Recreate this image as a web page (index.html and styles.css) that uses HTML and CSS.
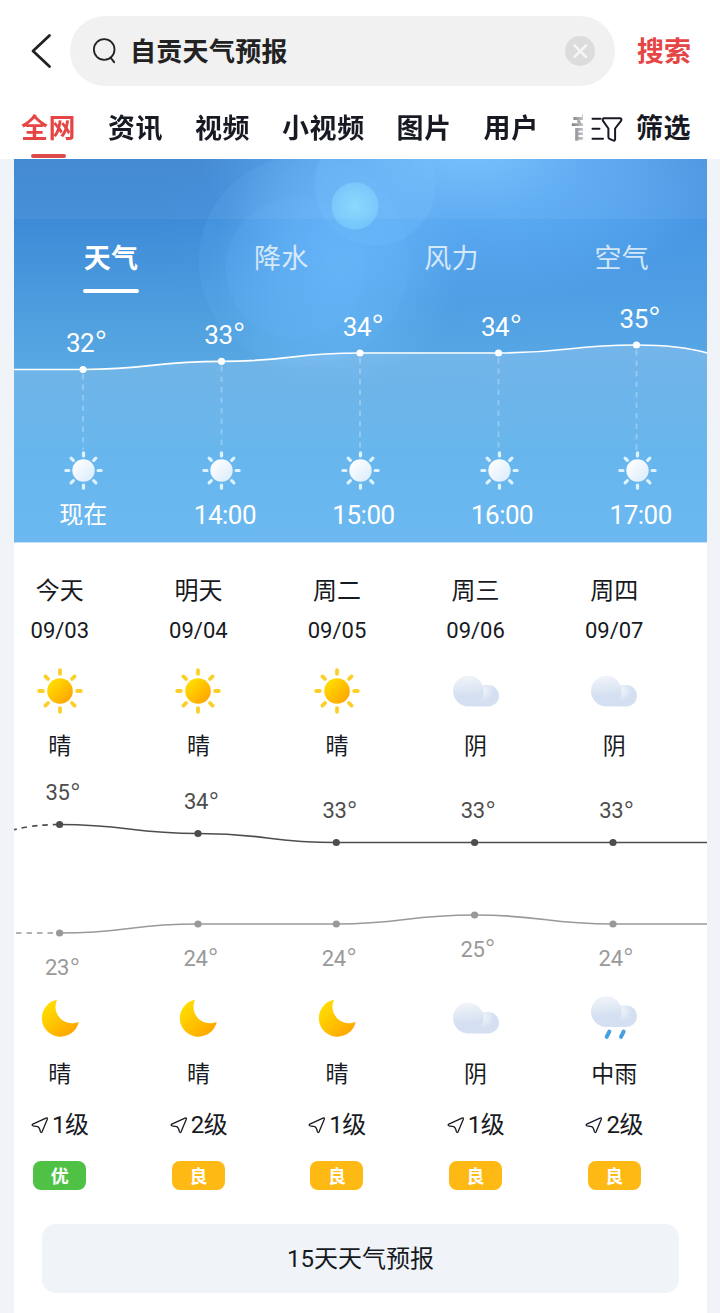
FILE: index.html
```html
<!DOCTYPE html>
<html lang="zh-CN">
<head>
  <meta charset="UTF-8">
  <title>自贡天气预报</title>
  <meta name="viewport" content="width=device-width, initial-scale=1.0">
  <link rel="stylesheet" href="styles.css">
</head>
<body>

<!-- shared icons -->
<svg class="sprite" width="0" height="0">
  <defs>
    <linearGradient id="gold" x1="0" y1="0" x2="1" y2="1">
      <stop offset="0.1" stop-color="#ffe000"/>
      <stop offset="0.9" stop-color="#ffa400"/>
    </linearGradient>
    <linearGradient id="pale" x1="0" y1="0" x2="1" y2="1">
      <stop offset="0.1" stop-color="#ffffff"/>
      <stop offset="0.9" stop-color="#dcedfc"/>
    </linearGradient>
    <linearGradient id="cloudBig" x1="0.45" y1="0" x2="0.55" y2="1">
      <stop offset="0" stop-color="#f1f4f9"/>
      <stop offset="0.65" stop-color="#d4e0f1"/>
    </linearGradient>
    <radialGradient id="cloudSmall" gradientUnits="userSpaceOnUse" cx="30" cy="22" r="11">
      <stop offset="0.1" stop-color="#eff3fa"/>
      <stop offset="1" stop-color="#d4e0f1"/>
    </radialGradient>
  </defs>
  <symbol id="rays" viewBox="0 0 46 46">
    <path d="M23 2.2v3.6M23 40.2v3.6M2.2 23h3.6M40.2 23h3.6M8.4 8.4l2.6 2.6M35 35l2.6 2.6M8.4 37.6l2.6-2.6M35 11l2.6-2.6" fill="none" stroke="currentColor" stroke-width="3.8" stroke-linecap="round"/>
  </symbol>
  <symbol id="sun" viewBox="0 0 46 46">
    <use href="#rays" color="#fbcf28"/>
    <circle cx="23" cy="23" r="12.8" fill="url(#gold)"/>
  </symbol>
  <symbol id="sunLight" viewBox="0 0 46 46">
    <use href="#rays" color="#dff2ff"/>
    <circle cx="23" cy="23" r="13.2" fill="url(#pale)"/>
  </symbol>
  <symbol id="cloud" viewBox="0 0 46 46">
    <rect x="10" y="17" width="36" height="21.400" rx="10.700" fill="url(#cloudSmall)"/>
    <circle cx="15.300" cy="23.100" r="15.300" fill="url(#cloudBig)"/>
  </symbol>
  <symbol id="moon" viewBox="0 0 46 46">
    <path d="M20 4.800A18.600 18.600 0 1 0 41.700 26.700C29 32.500 13.500 20.500 20 4.800z" fill="url(#gold)"/>
  </symbol>
  <symbol id="rain" viewBox="0 0 46 46">
    <use href="#cloud" y="-6.500" width="46" height="46"/>
    <path d="M18.300 36.600l-2.600 5.200M32.600 36.600l-2.600 5.200" stroke="#459fe0" stroke-width="4" stroke-linecap="round"/>
  </symbol>
  <symbol id="wind" viewBox="0 0 18 18">
    <path d="M1.800 8.100L15 2.100Q16.800 1.400 16.300 3.200L11.100 15.800Q10.200 17.200 9.400 15.700Q8.600 11.600 6.800 10.700L1.900 9.800Q.4 8.900 1.800 8.100z" fill="none" stroke="#171a22" stroke-width="1.300" stroke-linejoin="round"/>
  </symbol>
</svg>

<header class="header">
  <div class="search-row">
    <svg class="back" viewBox="0 0 22 36"><path d="M19.500 2.500L3 18l16.500 15.500" fill="none" stroke="#222" stroke-width="2.800" stroke-linecap="round" stroke-linejoin="round"/></svg>
    <div class="search-box">
      <svg class="search-icon" viewBox="0 0 26 26"><circle cx="12.200" cy="11.500" r="10.300" fill="none" stroke="#222" stroke-width="1.800"/><path d="M18.500 19.500l3.600 4.600" stroke="#222" stroke-width="2" stroke-linecap="round"/></svg>
      <span class="search-text">自贡天气预报</span>
      <svg class="clear" viewBox="0 0 30 30"><circle cx="15" cy="15" r="15" fill="#dcdcdc"/><path d="M9.500 9.300l11.500 11.500M21 9.300L9.500 20.800" stroke="#f6f6f6" stroke-width="2.600" stroke-linecap="round"/></svg>
    </div>
    <span class="search-btn">搜索</span>
  </div>
  <div class="nav-row">
    <nav class="nav">
      <span class="nav-item active">全网</span>
      <span class="nav-item">资讯</span>
      <span class="nav-item">视频</span>
      <span class="nav-item">小视频</span>
      <span class="nav-item">图片</span>
      <span class="nav-item">用户</span>
      <span class="nav-item">音</span>
    </nav>
    <div class="filter">
      <svg class="filter-icon" viewBox="0 0 32 26"><path d="M1.500 2.800h8M1.500 12.800h7M1.500 22.800h10.500" stroke="#171a22" stroke-width="2" stroke-linecap="round"/><path d="M13 2.300h16q2.300.5 1 2.600l-5.900 7.600v10.800q-.4 2-2 1.100l-3.600-1.600q-1.100-.5-1.100-1.800v-8.500L12 4.900q-1-2.100 1-2.600z" fill="none" stroke="#171a22" stroke-width="2" stroke-linejoin="round"/></svg>
      <span>筛选</span>
    </div>
  </div>
</header>

<main class="card">
  <section class="hourly">
    <div class="hourly-tabs">
      <span class="hourly-tab active">天气</span>
      <span class="hourly-tab">降水</span>
      <span class="hourly-tab">风力</span>
      <span class="hourly-tab">空气</span>
    </div>
    <svg class="hourly-chart" viewBox="0 0 693 152">
      <defs>
        <linearGradient id="area" gradientUnits="userSpaceOnUse" x1="0" y1="45" x2="0" y2="152">
          <stop offset="0" stop-color="#fff" stop-opacity="0.180"/>
          <stop offset="1" stop-color="#fff" stop-opacity="0"/>
        </linearGradient>
      </defs>
      <path d="M0 69.500H69C138 69.500 138 61.300 207.500 61.300S277 53 346 53H484.500C554 53 554 45 622.500 45Q665 45 693 53V152H0z" fill="url(#area)"/>
      <path d="M69 74V150M207.500 66V150M346 58V150M484.500 58V150M622.500 50V150" stroke="#fff" stroke-opacity="0.250" stroke-width="2" stroke-dasharray="5.500 5"/>
      <path d="M0 69.500H69C138 69.500 138 61.300 207.500 61.300S277 53 346 53H484.500C554 53 554 45 622.500 45Q665 45 693 53" fill="none" stroke="#fff" stroke-width="1.700"/>
      <g fill="#fff">
        <circle cx="69" cy="69.500" r="3.600"/>
        <circle cx="207.500" cy="61.300" r="3.600"/>
        <circle cx="346" cy="53" r="3.600"/>
        <circle cx="484.500" cy="53" r="3.600"/>
        <circle cx="622.500" cy="45" r="3.600"/>
      </g>
      <g class="temp-hour">
        <text x="52" y="51.800">32<tspan class="deg" dy="4">°</tspan></text>
        <text x="190.300" y="43.800">33<tspan class="deg" dy="4">°</tspan></text>
        <text x="328.700" y="35.800">34<tspan class="deg" dy="4">°</tspan></text>
        <text x="467" y="35.800">34<tspan class="deg" dy="4">°</tspan></text>
        <text x="605.600" y="27.800">35<tspan class="deg" dy="4">°</tspan></text>
      </g>
    </svg>
    <div class="hours">
      <div class="hour"><svg class="hour-icon"><use href="#sunLight"/></svg><span class="now">现在</span></div>
      <div class="hour"><svg class="hour-icon"><use href="#sunLight"/></svg><span class="time">14:00</span></div>
      <div class="hour"><svg class="hour-icon"><use href="#sunLight"/></svg><span class="time">15:00</span></div>
      <div class="hour"><svg class="hour-icon"><use href="#sunLight"/></svg><span class="time">16:00</span></div>
      <div class="hour"><svg class="hour-icon"><use href="#sunLight"/></svg><span class="time">17:00</span></div>
    </div>
  </section>

  <section class="daily">
    <div class="days">
      <div class="day"><span class="name">今天</span><span class="date">09/03</span><svg class="icon"><use href="#sun"/></svg><span class="desc">晴</span></div>
      <div class="day"><span class="name">明天</span><span class="date">09/04</span><svg class="icon"><use href="#sun"/></svg><span class="desc">晴</span></div>
      <div class="day"><span class="name">周二</span><span class="date">09/05</span><svg class="icon"><use href="#sun"/></svg><span class="desc">晴</span></div>
      <div class="day"><span class="name">周三</span><span class="date">09/06</span><svg class="icon"><use href="#cloud"/></svg><span class="desc">阴</span></div>
      <div class="day"><span class="name">周四</span><span class="date">09/07</span><svg class="icon"><use href="#cloud"/></svg><span class="desc">阴</span></div>
    </div>

    <svg class="daily-chart" viewBox="0 0 693 225">
      <!-- high -->
      <g fill="none" stroke="#4d4d4d" stroke-width="1.700">
        <path d="M45.600 54.500Q20 54.500 0 59.800" stroke-dasharray="5.500 5" stroke-dashoffset="-1"/>
        <path d="M45.600 54.500C115 54.500 115 63.500 184 63.500S253 72.500 322.300 72.500H693"/>
      </g>
      <g fill="#4d4d4d">
        <circle cx="45.600" cy="54.500" r="3.600"/>
        <circle cx="184" cy="63.500" r="3.600"/>
        <circle cx="322.300" cy="72.500" r="3.600"/>
        <circle cx="460.600" cy="72.500" r="3.600"/>
        <circle cx="599" cy="72.500" r="3.600"/>
      </g>
      <g class="temp-high">
        <text x="31.500" y="30">35<tspan class="deg" dy="3.500">°</tspan></text>
        <text x="170" y="39">34<tspan class="deg" dy="3.500">°</tspan></text>
        <text x="308.400" y="48">33<tspan class="deg" dy="3.500">°</tspan></text>
        <text x="446.800" y="48">33<tspan class="deg" dy="3.500">°</tspan></text>
        <text x="585.200" y="48">33<tspan class="deg" dy="3.500">°</tspan></text>
      </g>
      <!-- low -->
      <g fill="none" stroke="#999" stroke-width="1.700">
        <path d="M2 163H45.600" stroke-dasharray="5.500 5"/>
        <path d="M45.600 163C115 163 115 154 184 154H322.300C391 154 391 145 460.600 145S530 154 599 154H693"/>
      </g>
      <g fill="#999">
        <circle cx="45.600" cy="163" r="3.600"/>
        <circle cx="184" cy="154" r="3.600"/>
        <circle cx="322.300" cy="154" r="3.600"/>
        <circle cx="460.600" cy="145" r="3.600"/>
        <circle cx="599" cy="154" r="3.600"/>
      </g>
      <g class="temp-low">
        <text x="31" y="205">23<tspan class="deg" dy="3.500">°</tspan></text>
        <text x="169.400" y="195.700">24<tspan class="deg" dy="3.500">°</tspan></text>
        <text x="307.800" y="195.700">24<tspan class="deg" dy="3.500">°</tspan></text>
        <text x="446.400" y="186.700">25<tspan class="deg" dy="3.500">°</tspan></text>
        <text x="584.600" y="195.700">24<tspan class="deg" dy="3.500">°</tspan></text>
      </g>
    </svg>

    <div class="days nights">
      <div class="day"><svg class="icon"><use href="#moon"/></svg><span class="desc">晴</span><span class="wind"><svg><use href="#wind"/></svg>1级</span><span class="air good">优</span></div>
      <div class="day"><svg class="icon"><use href="#moon"/></svg><span class="desc">晴</span><span class="wind"><svg><use href="#wind"/></svg>2级</span><span class="air">良</span></div>
      <div class="day"><svg class="icon"><use href="#moon"/></svg><span class="desc">晴</span><span class="wind"><svg><use href="#wind"/></svg>1级</span><span class="air">良</span></div>
      <div class="day"><svg class="icon"><use href="#cloud"/></svg><span class="desc">阴</span><span class="wind"><svg><use href="#wind"/></svg>1级</span><span class="air">良</span></div>
      <div class="day"><svg class="icon"><use href="#rain"/></svg><span class="desc">中雨</span><span class="wind"><svg><use href="#wind"/></svg>2级</span><span class="air">良</span></div>
    </div>

    <div class="more">15天天气预报</div>
  </section>
</main>

</body>
</html>
```
FILE: styles.css
```css
:root {
  --ink: #171a22;
  --red: #e64545;
  --page: #f0f4f8;
}

* {
  box-sizing: border-box;
}

body {
  margin: 0;
  height: 1313px;
  overflow: hidden;
  background: var(--page);
  color: var(--ink);
  font-family: Roboto, "Noto Sans CJK SC", sans-serif;
}

svg {
  display: block;
  flex: none;
}

.sprite {
  position: absolute;
}

/* header */
.header {
  height: 159px;
  padding-top: 16px;
  background: #fff;
}

.search-row {
  display: flex;
  align-items: center;
  height: 70px;
  padding-left: 30px;
}

.back {
  width: 22px;
  height: 36px;
}

.search-box {
  display: flex;
  align-items: center;
  width: 545px;
  height: 70px;
  margin-left: 18px;
  padding: 0 20px 0 22px;
  border-radius: 35px;
  background: #f1f1f1;
}

.search-icon {
  width: 26px;
  height: 26px;
}

.search-text {
  flex: 1;
  margin-left: 12px;
  padding-top: 2px;
  color: #222;
  font-size: 26px;
  font-weight: 700;
  line-height: 40px;
  letter-spacing: 0.3px;
}

.clear {
  width: 30px;
  height: 30px;
}

.search-btn {
  margin-left: 22px;
  padding-top: 1px;
  color: var(--red);
  font-size: 27px;
  font-weight: 700;
  line-height: 40px;
}

.nav-row {
  display: flex;
  height: 73px;
  padding-left: 21px;
  font-size: 27px;
  font-weight: 700;
  line-height: 40px;
  letter-spacing: 0.6px;
}

.nav {
  display: flex;
  gap: 31.8px;
  width: 562px;
  padding-top: 23px;
  overflow: hidden;
  white-space: nowrap;
  -webkit-mask-image: linear-gradient(90deg, #000 535px, rgba(0, 0, 0, 0.25) 562px);
  mask-image: linear-gradient(90deg, #000 535px, rgba(0, 0, 0, 0.25) 562px);
}

.nav-item {
  flex: none;
}

.nav-item.active {
  color: var(--red);
}

.nav-item.active::after {
  content: "";
  display: block;
  width: 35px;
  height: 4px;
  margin: 5px auto 0;
  border-radius: 2px;
  background: #db4b4b;
}

.filter {
  display: flex;
  align-items: center;
  height: 40px;
  margin: 23px 0 0 8px;
}

.filter-icon {
  width: 32px;
  height: 26px;
  margin-right: 13px;
}

/* card */
.card {
  width: 693px;
  height: 1154px;
  margin-left: 14px;
  overflow: hidden;
  background: #fff;
}

.hourly {
  height: 384px;
  padding-top: 80px;
  border-bottom: 1px solid #c3dff5;
  color: #fff;
  background:
    linear-gradient(rgba(255, 255, 255, 0.05), rgba(255, 255, 255, 0.05)) 0 0 / 100% 60px no-repeat,
    radial-gradient(circle at 341px 47px, rgba(142, 228, 255, 0.75) 0, rgba(130, 215, 255, 0.5) 23px, transparent 24px),
    radial-gradient(circle at 361px 26px, rgba(115, 190, 255, 0.25) 60px, transparent 61px),
    radial-gradient(circle at 282px 109px, rgba(105, 182, 255, 0.15) 69.5px, transparent 70.5px),
    radial-gradient(circle at 290px 102px, rgba(110, 190, 255, 0.12) 104.5px, transparent 105.5px),
    radial-gradient(circle at 322px 105px, rgba(112, 190, 255, 0.65) 0, rgba(112, 190, 255, 0.4) 60px, rgba(112, 190, 255, 0) 125px),
    radial-gradient(ellipse 270px 160px at 455px -15px, rgba(115, 195, 255, 0.95) 0, rgba(105, 185, 255, 0.6) 45%, rgba(105, 185, 255, 0) 100%),
    radial-gradient(ellipse 480px 220px at 620px 60px, rgba(90, 170, 250, 0.4) 0, rgba(90, 170, 250, 0) 100%),
    linear-gradient(#3984d0 0, #3d8bd7 60px, #54a4e1 185px, #66b5ec 280px, #6bb9f0 383px);
}

.hourly-tabs {
  display: grid;
  grid-template-columns: repeat(4, 1fr);
  height: 61px;
  margin-left: 12px;
  text-align: center;
}

.hourly-tab {
  color: rgba(255, 255, 255, 0.75);
  font-size: 27px;
  line-height: 40px;
  letter-spacing: 0.5px;
}

.hourly-tab.active {
  color: #fff;
  font-weight: 700;
}

.hourly-tab.active::after {
  content: "";
  display: block;
  width: 56px;
  height: 3.5px;
  margin: 10px auto 0;
  border-radius: 2px;
  background: #fff;
}

.hourly-chart {
  width: 693px;
  height: 152px;
}

.temp-hour {
  fill: #fff;
  font-size: 26px;
  letter-spacing: -0.5px;
}

.deg {
  font-size: 1.35em;
  font-weight: 300;
}

.hours {
  display: grid;
  grid-template-columns: repeat(5, 1fr);
}

.hour {
  display: flex;
  flex-direction: column;
  align-items: center;
}

.hour-icon {
  width: 39px;
  height: 39px;
  margin-top: -1px;
}

.now,
.time {
  height: 40px;
  margin-top: 5px;
  font-size: 24px;
  line-height: 40px;
}

.time {
  padding-left: 6px;
  font-size: 26px;
  letter-spacing: -0.5px;
}

/* daily */
.daily {
  padding-top: 28px;
}

.days {
  display: grid;
  grid-template-columns: repeat(5, 1fr);
  margin-left: -23.5px;
  width: 693px;
}

.day {
  display: flex;
  flex-direction: column;
  align-items: center;
  height: 199px;
}

.name {
  font-size: 24px;
  line-height: 40px;
}

.date {
  font-size: 22px;
  line-height: 40px;
}

.icon {
  width: 46px;
  height: 46px;
  margin-top: 17px;
}

.desc {
  font-size: 23px;
  line-height: 40px;
  margin-top: 13px;
}

.daily-chart {
  width: 693px;
  height: 225px;
}

.temp-high,
.temp-low {
  fill: #4d4d4d;
  font-size: 22px;
  letter-spacing: -0.3px;
}

.temp-low {
  fill: #999;
}

.nights .day {
  height: 229px;
}

.nights .icon {
  margin-top: 0;
}

.nights .desc {
  margin-top: 14px;
}

.wind {
  display: flex;
  align-items: center;
  gap: 3px;
  height: 40px;
  margin-top: 10px;
  font-size: 24px;
  line-height: 40px;
  letter-spacing: -0.5px;
}

.wind svg {
  width: 18px;
  height: 18px;
}

.air {
  width: 53px;
  height: 28.5px;
  margin-top: 16px;
  border-radius: 8px;
  background: #ffb914;
  color: #fff;
  font-size: 18px;
  font-weight: 700;
  line-height: 31px;
  text-align: center;
}

.air.good {
  background: #4fc245;
}

.more {
  width: 637px;
  height: 69px;
  margin-left: 28px;
  border-radius: 14px;
  background: var(--page);
  font-size: 24px;
  line-height: 71px;
  text-align: center;
}
```
